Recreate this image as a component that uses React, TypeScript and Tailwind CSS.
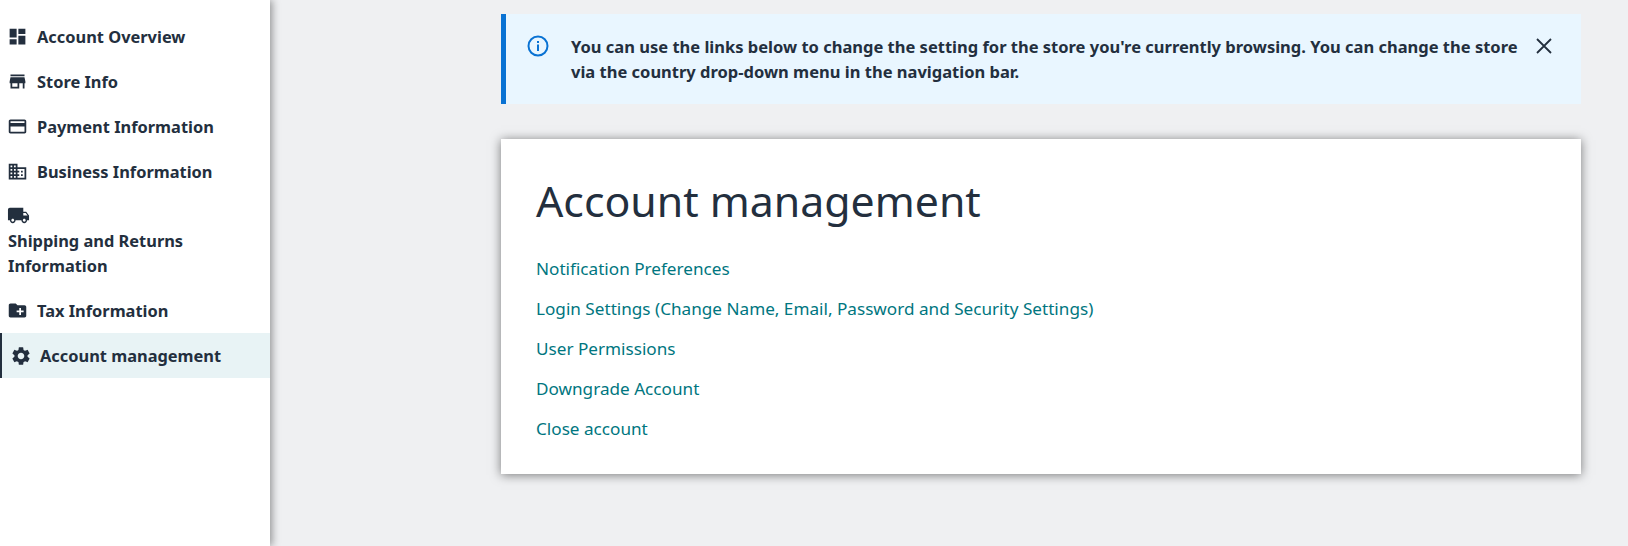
import React from "react";
import { MdDashboard, MdStore, MdCreditCard, MdBusiness, MdLocalShipping, MdCreateNewFolder, MdSettings } from "react-icons/md";

const navTop = [
  { label: "Account Overview", icon: MdDashboard },
  { label: "Store Info", icon: MdStore },
  { label: "Payment Information", icon: MdCreditCard },
  { label: "Business Information", icon: MdBusiness },
];

const links = [
  "Notification Preferences",
  "Login Settings (Change Name, Email, Password and Security Settings)",
  "User Permissions",
  "Downgrade Account",
  "Close account",
];

function NavRow({ label, icon: Icon }: { label: string; icon: React.ComponentType<{ className?: string }> }) {
  return (
    <a className="flex h-[45px] items-center pl-[7px]">
      <Icon className="h-[21px] w-[21px] shrink-0" />
      <span className="ml-[9px]">{label}</span>
    </a>
  );
}

export default function App() {
  return (
    <div className="flex h-[546px] overflow-hidden bg-[#eff0f2] font-['Noto_Sans','Open_Sans',sans-serif] text-[#232f3e]">
      {/* Sidebar */}
      <aside className="z-10 h-full w-[270px] shrink-0 bg-white pt-[14px] text-[16.4px] leading-[25px] font-bold shadow-[2px_0_8px_rgba(0,0,0,0.4)]">
        {navTop.map((item) => (
          <NavRow key={item.label} {...item} />
        ))}
        <a className="block pl-[7px] pt-[10px] pb-[10px]">
          <MdLocalShipping className="h-[23px] w-[23px]" />
          <span className="mt-[1px] ml-[1px] block w-[230px]">Shipping and Returns Information</span>
        </a>
        <NavRow label="Tax Information" icon={MdCreateNewFolder} />
        <a className="flex h-[45px] items-center border-l-2 border-[#232f3e] bg-[#e8f3f5] pl-[8px]">
          <MdSettings className="h-[22px] w-[22px] shrink-0" />
          <span className="ml-[8px]">Account management</span>
        </a>
      </aside>

      {/* Main */}
      <main className="ml-[231px] w-[1080px] pt-[14px]">
        <div className="flex h-[90px] border-l-[5px] border-[#0972d3] bg-[#e9f6ff] pl-[21px] pt-[20px]">
          <svg viewBox="0 0 22 22" className="mt-[1px] h-[22px] w-[22px] shrink-0 text-[#0972d3]" fill="none" stroke="currentColor" strokeWidth="2">
            <circle cx="11" cy="11" r="9.5" />
            <path d="M11 9.5V16M11 6v2" />
          </svg>
          <p className="ml-[22px] w-[950px] text-[16.5px] leading-[25px] font-bold">
            You can use the links below to change the setting for the store you're currently browsing. You can change the store via the country drop-down menu in the navigation bar.
          </p>
          <svg viewBox="0 0 16 16" className="mt-[4px] ml-[15px] h-[16px] w-[16px] shrink-0" fill="none" stroke="currentColor" strokeWidth="1.8">
            <path d="M1 1l14 14M15 1L1 15" />
          </svg>
        </div>

        <section className="mt-[35px] h-[335px] bg-white px-[35px] pt-[33px] shadow-[0_1px_10px_rgba(0,0,0,0.5)]">
          <h1 className="text-[42.8px] leading-[58px] font-normal">Account management</h1>
          <ul className="mt-[26px] flex flex-col gap-[15px] text-[17.15px] leading-[25px] text-[#007680]">
            {links.map((link) => (
              <li key={link}>
                <a>{link}</a>
              </li>
            ))}
          </ul>
        </section>
      </main>
    </div>
  );
}
